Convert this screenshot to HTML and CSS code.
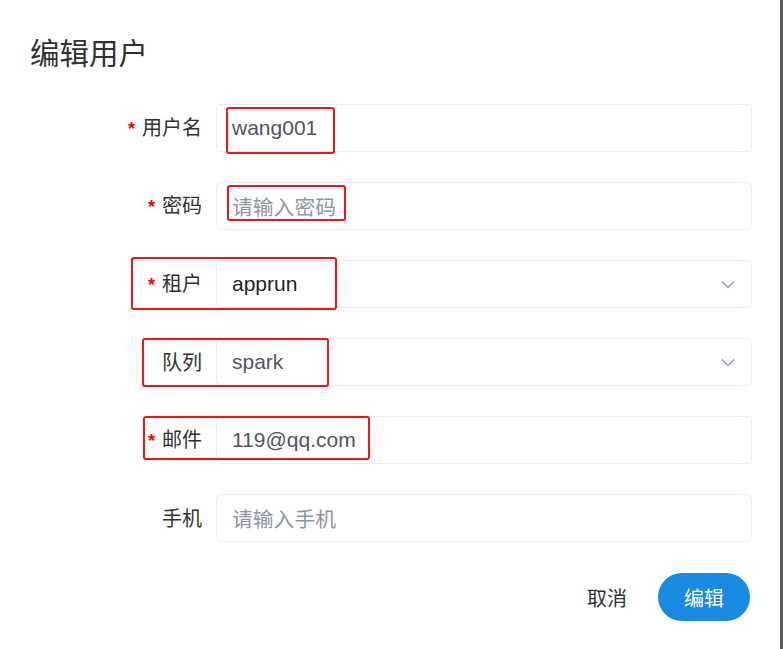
FILE: index.html
```html
<!DOCTYPE html>
<html lang="zh">
<head>
<meta charset="utf-8">
<title>编辑用户</title>
<link rel="stylesheet" href="styles.css">
</head>
<body>
<div class="dialog">
  <h2 class="title">编辑用户</h2>
  <div class="form">
    <div class="item">
      <label class="label"><span class="req">*</span>用户名</label>
      <div class="input"><span class="val">wang001</span></div>
      <span class="mark m1"></span>
    </div>
    <div class="item">
      <label class="label"><span class="req">*</span>密码</label>
      <div class="input"><span class="ph">请输入密码</span></div>
      <span class="mark m2"></span>
    </div>
    <div class="item">
      <label class="label"><span class="req">*</span>租户</label>
      <div class="input select"><span class="val dark">apprun</span>
        <svg class="chev" width="14" height="9" viewBox="0 0 14 9"><path d="M1 1.5 L7 7.5 L13 1.5" fill="none" stroke="#8497b8" stroke-width="1.3"/></svg>
      </div>
      <span class="mark m3"></span>
    </div>
    <div class="item">
      <label class="label">队列</label>
      <div class="input select"><span class="val">spark</span>
        <svg class="chev" width="14" height="9" viewBox="0 0 14 9"><path d="M1 1.5 L7 7.5 L13 1.5" fill="none" stroke="#8497b8" stroke-width="1.3"/></svg>
      </div>
      <span class="mark m4"></span>
    </div>
    <div class="item">
      <label class="label"><span class="req">*</span>邮件</label>
      <div class="input"><span class="val">119@qq.com</span></div>
      <span class="mark m5"></span>
    </div>
    <div class="item">
      <label class="label">手机</label>
      <div class="input"><span class="ph">请输入手机</span></div>
    </div>
  </div>
  <div class="footer">
    <button class="btn text">取消</button>
    <button class="btn primary">编辑</button>
  </div>
</div>
</body>
</html>
```
FILE: styles.css
```css
html, body {
  margin: 0;
  padding: 0;
}
html {
  background: #5c5c5c;
}
body {
  width: 780px;
  height: 649px;
  background: #ffffff;
  font-family: "Liberation Sans", "Noto Sans CJK SC", sans-serif;
  overflow: hidden;
}
.dialog {
  position: relative;
  display: flex;
  flex-direction: column;
  padding: 0 28px 0 30px;
}
.title {
  margin: 0;
  padding-top: 31px;
  height: 40px;
  line-height: 40px;
  font-size: 29.5px;
  font-weight: normal;
  color: #303133;
  font-family: "Noto Sans CJK SC", sans-serif;
}
.form {
  margin-top: 33px;
  display: flex;
  flex-direction: column;
  gap: 30px;
}
.item {
  position: relative;
  display: flex;
  align-items: center;
  height: 48px;
}
.label {
  width: 172px;
  padding-right: 14px;
  text-align: right;
  font-size: 20px;
  color: #303133;
  font-family: "Noto Sans CJK SC", sans-serif;
  line-height: 48px;
}
.req {
  color: #f00;
  font-family: "Liberation Sans", sans-serif;
  font-weight: bold;
  font-size: 18px;
  margin-right: 7px;
}
.input {
  flex: 1;
  height: 46px;
  border: 1px solid #e8ecf3;
  border-radius: 6px;
  display: flex;
  align-items: center;
  padding: 0 15px;
  font-size: 21px;
}
.val {
  color: #4f5561;
  font-family: "Liberation Sans", "Noto Sans CJK SC", sans-serif;
}
.val.dark {
  color: #1f2329;
}
.ph {
  font-size: 20.8px;
  color: #8b95a8;
  font-family: "Noto Sans CJK SC", sans-serif;
}
.select {
  justify-content: space-between;
  padding-right: 16px;
}
.chev {
  display: block;
}
.mark {
  position: absolute;
  border: 2px solid #f21414;
  border-radius: 3px;
  box-sizing: border-box;
}
.m1 { left: 196px; top: 3px; width: 109px; height: 47px; }
.m2 { left: 197px; top: 3px; width: 119px; height: 36px; }
.m3 { left: 101px; top: -3px; width: 206px; height: 53px; }
.m4 { left: 112px; top: 0px; width: 187px; height: 49px; }
.m5 { left: 113px; top: 0px; width: 227px; height: 44px; }
.footer {
  display: flex;
  justify-content: flex-end;
  align-items: center;
  gap: 11px;
  margin-top: 31px;
  padding-right: 2px;
}
.btn {
  font-family: "Noto Sans CJK SC", sans-serif;
  font-size: 20px;
  border: none;
  cursor: pointer;
}
.btn.text {
  background: transparent;
  color: #303133;
  padding: 0 20px;
  height: 48px;
}
.btn.primary {
  background: #188ae1;
  color: #fff;
  width: 92px;
  height: 48px;
  border-radius: 24px;
}
```
